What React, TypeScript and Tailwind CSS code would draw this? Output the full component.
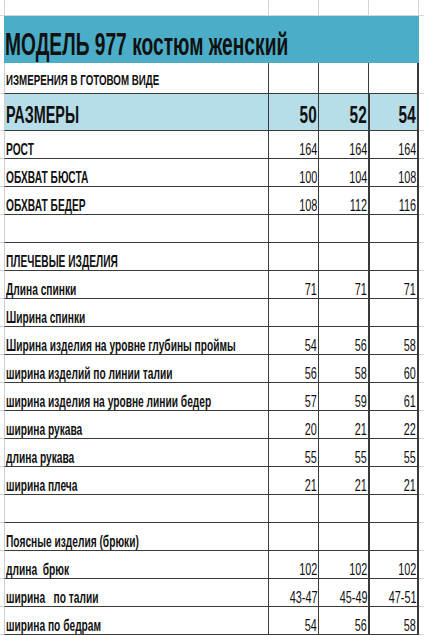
const rows: { label: string; v?: [string, string, string] }[] = [
  { label: "РОСТ", v: ["164", "164", "164"] },
  { label: "ОБХВАТ БЮСТА", v: ["100", "104", "108"] },
  { label: "ОБХВАТ БЕДЕР", v: ["108", "112", "116"] },
  { label: "" },
  { label: "ПЛЕЧЕВЫЕ ИЗДЕЛИЯ" },
  { label: "Длина спинки", v: ["71", "71", "71"] },
  { label: "Ширина спинки" },
  { label: "Ширина изделия на уровне глубины проймы", v: ["54", "56", "58"] },
  { label: "ширина изделий по линии талии", v: ["56", "58", "60"] },
  { label: "ширина изделия на уровне линии бедер", v: ["57", "59", "61"] },
  { label: "ширина рукава", v: ["20", "21", "22"] },
  { label: "длина рукава", v: ["55", "55", "55"] },
  { label: "ширина плеча", v: ["21", "21", "21"] },
  { label: "" },
  { label: "Поясные изделия (брюки)" },
  { label: "длина  брюк", v: ["102", "102", "102"] },
  { label: "ширина   по талии", v: ["43-47", "45-49", "47-51"] },
  { label: "ширина по бедрам", v: ["54", "56", "58"] },
]

// text in the screenshot is a narrow Excel font, squeezed horizontally
function Narrow({ children, right, wide }: { children: React.ReactNode; right?: boolean; wide?: boolean }) {
  return (
    <span
      className={`inline-block whitespace-pre ${wide ? "scale-x-[0.64]" : "scale-x-[0.6]"} ${right ? "origin-right" : "origin-left"}`}
    >
      {children}
    </span>
  )
}

function Row({ label, v }: { label: string; v?: [string, string, string] }) {
  return (
    <div className="flex h-[28px]">
      <div className="w-[4px] border-b border-[#d4d4d4]" />
      <div className="w-[264px] border-b border-l border-[#3a3a3a] border-l-[#cfcfcf] flex items-end pl-[1px] font-bold text-[17px] leading-none">
        <Narrow>{label}</Narrow>
      </div>
      {[0, 1, 2].map((i) => (
        <div
          key={i}
          className={`${i === 2 ? "w-[51px] border-x-2 border-l-[#3a3a3a]" : "w-[50px] border-l"} border-b border-[#3a3a3a] flex items-end justify-end pr-[1px] text-[17px] leading-none`}
        >
          {v && <Narrow right wide>{v[i]}</Narrow>}
        </div>
      ))}
      <div className="flex-1 border-b border-[#d4d4d4]" />
    </div>
  )
}

export default function App() {
  return (
    <div className="w-[424px] h-[636px] bg-white text-[#111] font-['Liberation_Sans',Arial,sans-serif] overflow-hidden">
      <div className="flex h-[16px]">
        <div className="w-[4px] border-b border-[#d4d4d4]" />
        <div className="w-[264px] border-b border-l border-[#d4d4d4]" />
        <div className="w-[50px] border-b border-l border-[#d4d4d4]" />
        <div className="w-[50px] border-b border-l border-[#d4d4d4]" />
        <div className="w-[51px] border-b border-x border-[#d4d4d4]" />
        <div className="flex-1 border-b border-[#d4d4d4]" />
      </div>
      <div className="flex h-[47px]">
        <div className="w-[4px]" />
        <div className="w-[415px] bg-[#4badc7] flex items-end pl-[1px] pb-[3px] text-[32px] font-bold leading-none">
          <span className="inline-block whitespace-pre origin-left scale-x-[0.6]">МОДЕЛЬ 977 костюм женский</span>
        </div>
        <div className="flex-1" />
      </div>
      <div className="flex h-[31px]">
        <div className="w-[4px] border-b border-[#d4d4d4]" />
        <div className="w-[264px] border-b border-l border-[#3a3a3a] border-l-[#cfcfcf] flex items-end pl-[1px] pb-[6px] font-bold text-[15px] leading-none">
          <span className="inline-block whitespace-pre origin-left scale-x-[0.65]">ИЗМЕРЕНИЯ В ГОТОВОМ ВИДЕ</span>
        </div>
        <div className="w-[50px] border-b border-l border-[#3a3a3a]" />
        <div className="w-[50px] border-b border-l border-[#3a3a3a]" />
        <div className="w-[51px] border-b border-x-2 border-l border-[#3a3a3a]" />
        <div className="flex-1 border-b border-[#d4d4d4]" />
      </div>
      <div className="flex h-[37px]">
        <div className="w-[4px] border-b border-[#d4d4d4]" />
        <div className="w-[264px] bg-[#b6dde8] border-b border-l border-[#3a3a3a] border-l-[#cfcfcf] flex items-end pl-[1px] pb-[3px] font-bold text-[24px] leading-none">
          <Narrow>РАЗМЕРЫ</Narrow>
        </div>
        {["50", "52", "54"].map((s, i) => (
          <div
            key={s}
            className={`${i === 2 ? "w-[51px] border-x-2 border-l-[#3a3a3a]" : "w-[50px] border-l"} bg-[#b6dde8] border-b border-[#3a3a3a] flex items-end justify-end pr-[1px] pb-[3px] font-bold text-[24px] leading-none`}
          >
            <Narrow right wide>{s}</Narrow>
          </div>
        ))}
        <div className="flex-1 border-b border-[#d4d4d4]" />
      </div>
      {rows.map((r, i) => (
        <Row key={i} label={r.label} v={r.v} />
      ))}
    </div>
  )
}
